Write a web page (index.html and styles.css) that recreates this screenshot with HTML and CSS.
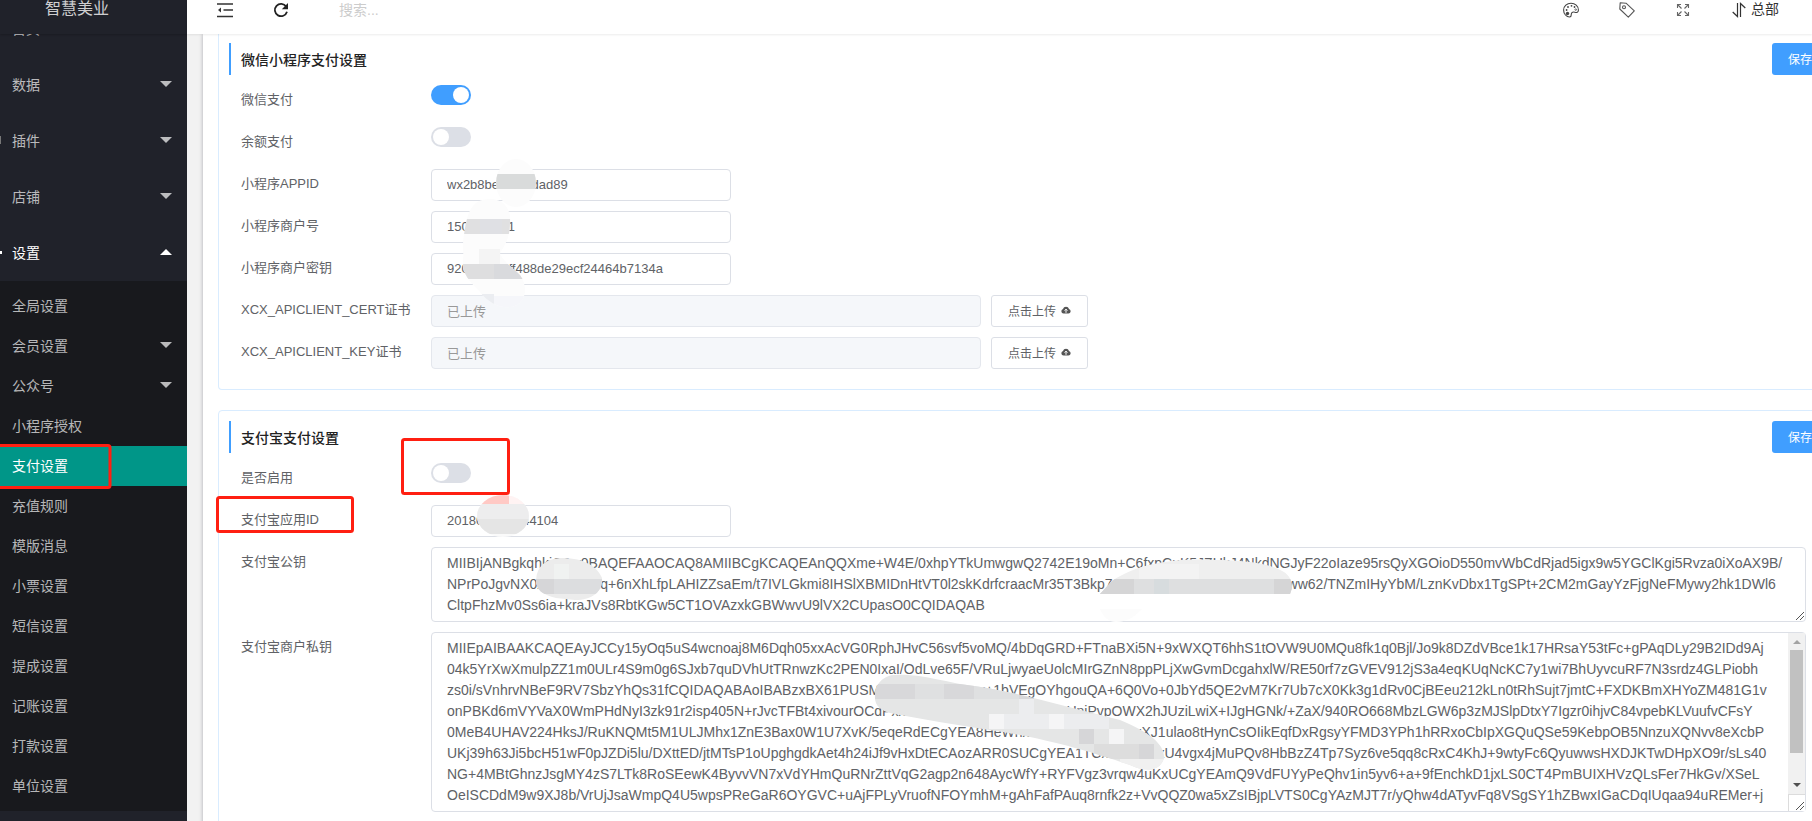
FILE: index.html
```html
<!DOCTYPE html>
<html lang="zh-CN">
<head>
<meta charset="utf-8">
<title>智慧美业</title>
<link rel="stylesheet" href="styles.css">
</head>
<body>
<div class="app">
  <aside class="sidebar">
    <div class="logo">智慧美业</div>
    <nav class="nav">
      <ul class="menu">
        <li class="item"><a href="#"><i class="stub"></i>首页</a></li>
        <li class="item"><a href="#">数据<span class="caret"></span></a></li>
        <li class="item"><a href="#"><i class="stub"></i>插件<span class="caret"></span></a></li>
        <li class="item"><a href="#">店铺<span class="caret"></span></a></li>
        <li class="item open"><a href="#"><i class="stub dot"></i>设置<span class="caret up"></span></a>
          <ul class="submenu">
            <li><a href="#">全局设置</a></li>
            <li><a href="#">会员设置<span class="caret"></span></a></li>
            <li><a href="#">公众号<span class="caret"></span></a></li>
            <li><a href="#">小程序授权</a></li>
            <li><a href="#" class="active">支付设置</a></li>
            <li><a href="#">充值规则</a></li>
            <li><a href="#">模版消息</a></li>
            <li><a href="#">小票设置</a></li>
            <li><a href="#">短信设置</a></li>
            <li><a href="#">提成设置</a></li>
            <li><a href="#">记账设置</a></li>
            <li><a href="#">打款设置</a></li>
            <li><a href="#">单位设置</a></li>
          </ul>
        </li>
      </ul>
    </nav>
  </aside>
  <div class="main">
    <header class="topbar">
      <button class="icon-btn" type="button" aria-label="折叠菜单">
        <svg width="16" height="16" viewBox="0 0 16 16" fill="none" stroke="#333" stroke-width="1.5"><path d="M0 2h16M6.500 8H16M0 14.500h16"/><path d="M4 5.500v5L1 8z" fill="#333" stroke="none"/></svg>
      </button>
      <button class="icon-btn" type="button" aria-label="刷新">
        <svg width="16" height="16" viewBox="0 0 16 16" fill="none" stroke="#222" stroke-width="1.800"><path d="M13.200 4.500A6.200 6.200 0 1 0 14 9.800"/><path d="M15 1v6.200H8.800z" fill="#222" stroke="none"/></svg>
      </button>
      <input class="search" type="text" placeholder="搜索..." aria-label="搜索">
      <div class="tools">
        <button class="icon-btn" type="button" aria-label="主题">
          <svg width="16" height="16" viewBox="0 0 16 16" fill="none" stroke="#444" stroke-width="1.100"><path d="M8 1.200C4 1.200.6 4 .6 8S3.500 15 6.600 15c2 0 1.500-1.700 1.700-3 .3-1.800 2-2.200 3.500-1.800 2 .6 3.500.3 3.600-2C15.500 4 12 1.200 8 1.200z"/><g fill="#444" stroke="none"><circle cx="4.500" cy="11.500" r="1.700"/><circle cx="3.600" cy="8" r=".9"/><circle cx="5" cy="5" r=".9"/><circle cx="8.500" cy="3.800" r=".9"/><circle cx="11.500" cy="5" r=".9"/></g><circle cx="12.700" cy="7.600" r=".8" stroke-width=".7"/></svg>
        </button>
        <button class="icon-btn" type="button" aria-label="便签">
          <svg width="16" height="16" viewBox="0 0 16 16" fill="none" stroke="#555" stroke-width="1.100"><path d="M1.200 .8 7 1.200l8.300 7.600-6 6.400L.8 7z" stroke-linejoin="round"/><circle cx="5" cy="5.200" r="1.500"/></svg>
        </button>
        <button class="icon-btn" type="button" aria-label="全屏">
          <svg width="16" height="16" viewBox="0 0 16 16" fill="none" stroke="#666" stroke-width="1.100"><path d="M2.500 6V2.500H6M2.500 2.500l4 4M10 2.500h3.500V6M13.500 2.500l-4 4M2.500 10v3.500H6M2.500 13.500l4-4M10 13.500h3.500V10M13.500 13.500l-4-4"/></svg>
        </button>
        <a class="shop" href="#"><svg width="14" height="16" viewBox="0 0 14 16" fill="none" stroke="#333" stroke-width="1.200"><path d="M5.500 1v13.500L.7 10M8.500 15V1.500L13.300 6"/></svg>总部</a>
      </div>
    </header>
    <div class="content">
      <div class="panel">
        <section class="card">
          <div class="card-head"><h2>微信小程序支付设置</h2><button class="save" type="button">保存</button></div>
          <div class="row"><label for="wxpay">微信支付</label><input id="wxpay" class="switch" type="checkbox" checked></div>
          <div class="row"><label for="yepay">余额支付</label><input id="yepay" class="switch" type="checkbox"></div>
          <div class="row"><label for="appid">小程序APPID</label><input id="appid" class="text" type="text" value="wx2b8bexxxxxdad89"></div>
          <div class="row"><label for="mchid">小程序商户号</label><input id="mchid" class="text" type="text" value="150xxxxxx1"></div>
          <div class="row"><label for="mchkey">小程序商户密钥</label><input id="mchkey" class="text" type="text" value="920xxxxx5ff488de29ecf24464b7134a"></div>
          <div class="row"><label for="cert">XCX_APICLIENT_CERT证书</label><input id="cert" class="text wide" type="text" value="已上传" disabled><button class="upload" type="button">点击上传<svg width="10" height="10" viewBox="0 0 10 10"><path d="M2.500 8.500A2.300 2.300 0 0 1 2 4a3.100 3.100 0 0 1 6 0 2.300 2.300 0 0 1-.5 4.500z" fill="#555"/><path d="M5 4v3.800M3.600 5.600 5 4.200l1.400 1.400" stroke="#fff" fill="none"/></svg></button></div>
          <div class="row"><label for="key">XCX_APICLIENT_KEY证书</label><input id="key" class="text wide" type="text" value="已上传" disabled><button class="upload" type="button">点击上传<svg width="10" height="10" viewBox="0 0 10 10"><path d="M2.500 8.500A2.300 2.300 0 0 1 2 4a3.100 3.100 0 0 1 6 0 2.300 2.300 0 0 1-.5 4.500z" fill="#555"/><path d="M5 4v3.800M3.600 5.600 5 4.200l1.400 1.400" stroke="#fff" fill="none"/></svg></button></div>
        </section>
        <section class="card">
          <div class="card-head"><h2>支付宝支付设置</h2><button class="save" type="button">保存</button></div>
          <div class="row"><label for="alion">是否启用</label><input id="alion" class="switch" type="checkbox"></div>
          <div class="row"><label for="aliid">支付宝应用ID</label><input id="aliid" class="text" type="text" value="20180xxxxxx44104"></div>
          <div class="row"><label for="alipub">支付宝公钥</label><div class="area"><textarea id="alipub" rows="3" spellcheck="false">MIIBIjANBgkqhkiG9w0BAQEFAAOCAQ8AMIIBCgKCAQEAnQQXme+W4E/0xhpYTkUmwgwQ2742E19oMn+C6fxpCuK5JZUkJ4NkdNGJyF22oIaze95rsQyXGOioD550mvWbCdRjad5igx9w5YGClKgi5Rvza0iXoAX9B/
NPrPoJgvNX0xxxxxxxxxq+6nXhLfpLAHIZZsaEm/t7IVLGkmi8IHSlXBMIDnHtVT0l2skKdrfcraacMr35T3Bkp7xxxxxxxxxxxxxxxxxxxxxxxxxww62/TNZmIHyYbM/LznKvDbx1TgSPt+2CM2mGayYzFjgNeFMywy2hk1DWl6
CltpFhzMv0Ss6ia+kraJVs8RbtKGw5CT1OVAzxkGBWwvU9lVX2CUpasO0CQIDAQAB</textarea><svg class="grip" width="10" height="10" viewBox="0 0 10 10" stroke="#555" fill="none"><path d="M1 9l8-8M5 9l4-4"/></svg></div></div>
          <div class="row"><label for="alipri">支付宝商户私钥</label><div class="area"><textarea id="alipri" rows="8" spellcheck="false">MIIEpAIBAAKCAQEAyJCCy15yOq5uS4wcnoaj8M6Dqh05xxAcVG0RphJHvC56svf5voMQ/4bDqGRD+FTnaBXi5N+9xWXQT6hhS1tOVW9U0MQu8fk1q0Bjl/Jo9k8DZdVBce1k17HRsaY53tFc+gPAqDLy29B2IDd9Aj
04k5YrXwXmulpZZ1m0ULr4S9m0g6SJxb7quDVhUtTRnwzKc2PEN0IxaI/OdLve65F/VRuLjwyaeUolcMIrGZnN8ppPLjXwGvmDcgahxlW/RE50rf7zGVEV912jS3a4eqKUqNcKC7y1wi7BhUyvcuRF7N3srdz4GLPiobh
zs0i/sVnhrvNBeF9RV7SbzYhQs31fCQIDAQABAoIBABzxBX61PUSMxxxxxxxxxxxxxxx+1bVEgOYhgouQA+6Q0Vo+0JbYd5QE2vM7Kr7Ub7cX0Kk3g1dRv0CjBEeu212kLn0tRhSujt7jmtC+FXDKBmXHYoZM481G1v
onPBKd6mVYVaX0WmPHdNyI3zk91r2isp405N+rJvcTFBt4xivourOCdPxxxxxxxxxxxxxxxxxxxxxxxxxUniPvpOWX2hJUziLwiX+IJgHGNk/+ZaX/940RO668MbzLGW6p3zMJSlpDtxY7Igzr0ihjvC84vpebKLVuufvCFsY
0MeB4UHAV224HksJ/RuKNQMt5M1ULJMhx1ZnE3Bax0W1U7XvK/5eqeRdECgYEA8HeWnxxxxxxxxxxxxxxxxxXJ1ulao8tHynCsOIikEqfDxRgsyYFMD3YPh1hRRxoCbIpXGQuQSe59KebpOB5NnzuXQNvv8eXcbP
UKj39h63Ji5bcH51wF0pJZDi5lu/DXttED/jtMTsP1oUpghgdkAet4h24iJf9vHxDtECAozARR0SUCgYEA1TCxxxxxxxxxU4vgx4jMuPQv8HbBzZ4Tp7Syz6ve5qq8cRxC4KhJ+9wtyFc6QyuwwsHXDJKTwDHpXO9r/sLs40
NG+4MBtGhnzJsgMY4zS7LTk8RoSEewK4ByvvVN7xVdYHmQuRNrZttVqG2agp2n648AycWfY+RYFVgz3vrqw4uKxUCgYEAmQ9VdFUYyPeQhv1in5yv6+a+9fEnchkD1jxLS0CT4PmBUIXHVzQLsFer7HkGv/XSeL
OeISCDdM9w9XJ8b/VrUjJsaWmpQ4U5wpsPReGaR6OYGVC+uAjFPLyVruofNFOYmhM+gAhFafPAuq8rnfk2z+VvQQZ0wa5xZsIBjpLVTS0CgYAzMJT7r/yQhw4dATyvFq8VSgSY1hZBwxIGaCDqIUqaa94uREMer+j</textarea><div class="scroll"><i class="arrow"></i><i class="thumb"></i><i class="arrow down"></i><i class="corner"></i></div><svg class="grip" width="10" height="10" viewBox="0 0 10 10" stroke="#555" fill="none"><path d="M1 9l8-8M5 9l4-4"/></svg></div></div>
        </section>
      </div>
    </div>
  </div>
  <svg class="notes" width="1812" height="821" viewBox="0 0 1812 821" aria-hidden="true">
    <defs>
      <clipPath id="c1"><ellipse cx="516" cy="183" rx="20" ry="24"/></clipPath>
      <clipPath id="c2"><path d="M490 199C505 199 511 210 510 222 510 240 504 245 500 254 505 263 513 268 520 275 528 286 526 300 517 305 505 311 490 305 480 292 468 280 462 272 463 262 464 252 462 245 464 235 467 215 470 199 490 199z"/></clipPath>
      <clipPath id="c3"><ellipse cx="503" cy="516" rx="26" ry="21"/></clipPath>
      <clipPath id="c4"><path d="M536 580C537 566 545 559 560 558 580 558 595 563 602 578 603 592 592 600 575 600L556 598C543 595 536 590 536 580z"/></clipPath>
      <clipPath id="c5"><path d="M1100 594L1112 581C1140 562 1180 558 1215 560 1260 560 1290 568 1291 582L1292 588 1290 594z"/></clipPath>
      <clipPath id="c6"><path d="M895 675C915 674 930 678 960 684 1010 690 1060 705 1120 720 1150 732 1165 745 1164 758 1160 772 1145 772 1130 765 1100 755 1070 745 1020 735 980 728 935 722 895 714 880 712 874 705 875 695 875 683 885 675 895 675z"/></clipPath>
    </defs>
    <g clip-path="url(#c1)"><path fill="#fcfcfc" d="M490 155h50v60h-50z"/><path fill="#d9dbdb" d="M490 174h50v15h-50z"/></g>
    <g clip-path="url(#c2)"><path fill="#fcfcfc" d="M460 195h70v115h-70z"/><path fill="#e0e0e1" d="M460 219h60v15h-60z"/><path fill="#dfe0e4" d="M480 219h22v15h-22z"/><path fill="#f4f4f4" d="M479 249h21v15h-21z"/><path fill="#dededf" d="M460 264h34v15h-34z"/><path fill="#d9dadd" d="M494 264h36v15h-36z"/><path fill="#ebedf1" d="M460 294h34v15h-34z"/><path fill="#f5f6fa" d="M494 296h36v15h-36z"/></g>
    <g clip-path="url(#c3)"><path fill="#fafafa" d="M475 494h56v46h-56z"/><path fill="#ffc9c5" d="M475 494h34v10h-34z"/><path fill="#fff3f3" d="M509 494h20v10h-20z"/><path fill="#ededee" d="M475 504h56v15h-56z"/><path fill="#e5e5e5" d="M475 519h56v15h-56z"/></g>
    <g clip-path="url(#c4)"><path fill="#ececec" d="M534 556h70v46h-70z"/><path fill="#f0f2f1" d="M554 564h15v15h-15z"/><path fill="#dcdddf" d="M534 579h70v15h-70z"/><path fill="#d6d6d8" d="M534 579h20v15h-20z"/></g>
    <g clip-path="url(#c5)"><path fill="#efefef" d="M1098 556h196v40h-196z"/><path fill="#f3f3f3" d="M1139 564h60v15h-60z"/><path fill="#dedfe0" d="M1098 579h196v15h-196z"/><path fill="#d5d5d6" d="M1098 579h36v15h-36zM1274 579h20v15h-20z"/><path fill="#d7dcde" d="M1154 579h15v15h-15z"/></g>
    <path fill="#fcfcfc" d="M1100 609h42c-8 8-15 13-26 13-8 0-13-6-16-13z"/>
    <g clip-path="url(#c6)"><path fill="#e5e6e6" d="M870 670h300v105H870z"/><path fill="#d8d8da" d="M875 684h40v15h-40zM944 684h30v15h-30zM1019 695h15v19h-15z"/><path fill="#dfe0e1" d="M915 684h29v15h-29zM974 684h45v15h-45z"/><path fill="#f5f5f6" d="M989 714h15v15h-15zM1049 714h15v15h-15zM1109 729h15v15h-15z"/><path fill="#ecedef" d="M1019 699h15v15h-15zM1004 714h45v15h-45zM1064 714h45v15h-45z"/><path fill="#d6d6d8" d="M1079 729h15v15h-15zM1139 744h15v15h-15z"/><path fill="#ddd" d="M1094 744h45v15h-45z"/><path fill="#f0f0f0" d="M1120 759h50v15h-50z"/></g>
    <g fill="none" stroke="#ff1f11" stroke-width="3"><rect x="-4" y="445.500" width="114" height="42" rx="2"/><rect x="402.500" y="439.500" width="106" height="54" rx="2"/><rect x="217.500" y="497.500" width="135" height="34" rx="2"/></g>
  </svg>
</div>
</body>
</html>
```
FILE: styles.css
```css
* { box-sizing: border-box; }
body, h2, ul { margin: 0; padding: 0; }
body, input, button, textarea { font-family: "Liberation Sans", Arial, "Noto Sans CJK SC", sans-serif; }
body { font-size: 14px; color: #333; overflow: hidden; }
ul { list-style: none; }
a { color: inherit; text-decoration: none; }
button { cursor: pointer; padding: 0; }

.app { position: relative; display: flex; height: 100vh; overflow: hidden; background: #f2f2f2; }

.sidebar { width: 187px; flex: none; display: flex; flex-direction: column; background: #20222a; color: rgba(255, 255, 255, .7); overflow: hidden; }
.logo { position: relative; z-index: 1; flex: none; height: 34px; padding-right: 33px; line-height: 18px; font-size: 16px; text-align: center; color: rgba(255, 255, 255, .8); background: #20222a; box-shadow: 0 1px 2px rgba(0, 0, 0, .2); }
.nav { flex: 1; }
.menu { margin-top: -33px; }
.menu a { display: flex; align-items: center; justify-content: space-between; height: 56px; padding: 0 15px 2px 12px; position: relative; }
.open > a { color: #fff; }
.submenu { padding: 5px 0; background: #18191d; }
.menu .submenu a { height: 40px; }
.submenu .active { background: #009688; color: #fff; }
.caret { border: 6px solid transparent; border-top-color: rgba(255, 255, 255, .7); border-bottom-width: 0; }
.caret.up { border-top-width: 0; border-bottom: 6px solid #fff; }
.stub { position: absolute; left: 0; width: 1px; height: 8px; background: #777; }
.stub.dot { height: 3px; width: 2px; background: #fff; }

.main { flex: 1; min-width: 0; display: flex; flex-direction: column; }
.topbar { position: relative; z-index: 1; flex: none; display: flex; align-items: flex-start; height: 34px; padding: 2px 33px 0 30px; background: #fff; box-shadow: 0 1px 2px rgba(0, 0, 0, .08); }
.icon-btn { border: 0; background: none; width: 16px; height: 16px; margin-right: 40px; }
.icon-btn svg, .shop svg { display: block; }
.search { border: 0; outline: 0; padding: 0; width: 200px; height: 16px; margin-left: 10px; font-size: 14px; }
.search::placeholder { color: #ccc; }
.tools { display: flex; margin-left: auto; line-height: 14px; }
.tools .icon-btn + .icon-btn + .icon-btn { margin-right: 41px; }
.shop { display: flex; gap: 5px; }

.content { flex: 1; min-height: 0; padding-left: 16px; overflow: hidden; }
.panel { min-height: 100%; padding-left: 15px; background: #fff; box-shadow: 0 0 4px rgba(0, 0, 30, .3); }
.card { margin: 0 -27px 20px 0; padding: 10px; border: 1px solid #d9ecff; border-radius: 4px; }
.card:first-child { border-top: 0; border-radius: 0 0 4px 4px; padding-top: 9px; }
.card-head { display: flex; justify-content: space-between; margin-bottom: 10px; border-left: 2px solid #409eff; height: 32px; }
.card-head h2 { padding-left: 10px; font-size: 14px; line-height: 34px; font-weight: 500; color: #222; }
.save { width: 56px; height: 32px; padding-bottom: 2px; border: 0; border-radius: 3px; background: #409eff; color: #fff; font-size: 12px; }
.row { display: flex; min-height: 32px; margin-bottom: 10px; padding: 0 22px 0 12px; }
.row label { flex: none; width: 190px; font-size: 13px; line-height: 30px; color: #606266; }
.text { width: 300px; height: 32px; padding: 0 15px 2px; border: 1px solid #dcdfe6; border-radius: 4px; background: #fff; color: #606266; font-size: 13px; }
.text.wide { width: 550px; margin-right: 10px; background: #f5f7fa; border-color: #e4e7ed; color: #999; }
.upload { display: flex; align-items: center; justify-content: center; gap: 5px; width: 97px; height: 32px; padding-bottom: 2px; border: 1px solid #dcdfe6; border-radius: 3px; background: #fff; color: #606266; font-size: 12px; }
.switch { appearance: none; width: 40px; height: 20px; margin: 0; padding: 2px; border-radius: 10px; background: #dcdfe6; display: flex; }
.switch::before { content: ""; width: 16px; height: 16px; border-radius: 50%; background: #fff; }
.switch:checked { justify-content: flex-end; background: #409eff; }
.area { position: relative; flex: 1; min-width: 0; }
textarea { display: block; width: 100%; padding: 5px 15px; border: 1px solid #dcdfe6; border-radius: 4px; outline: 0; resize: none; overflow: hidden; white-space: pre; font-size: 14px; line-height: 21px; color: #606266; }
.grip { position: absolute; right: 1px; bottom: 1px; }
.scroll { position: absolute; top: 1px; right: 1px; bottom: 1px; width: 17px; display: flex; flex-direction: column; align-items: center; background: #f1f1f1; }
.arrow { margin: 7px 0 6px; border: 4px solid transparent; border-bottom-color: #a3a3a3; border-top: 0; }
.thumb { width: 13px; height: 103px; background: #c1c1c1; }
.arrow.down { margin: auto 0 7px; border-top: 4px solid #505050; border-bottom: 0; }
.corner { width: 17px; height: 17px; background: #fff; border: 1px solid #dcdcdc; border-width: 1px 0 0 1px; }

.notes { position: absolute; left: 0; top: 0; z-index: 2; pointer-events: none; }
```
